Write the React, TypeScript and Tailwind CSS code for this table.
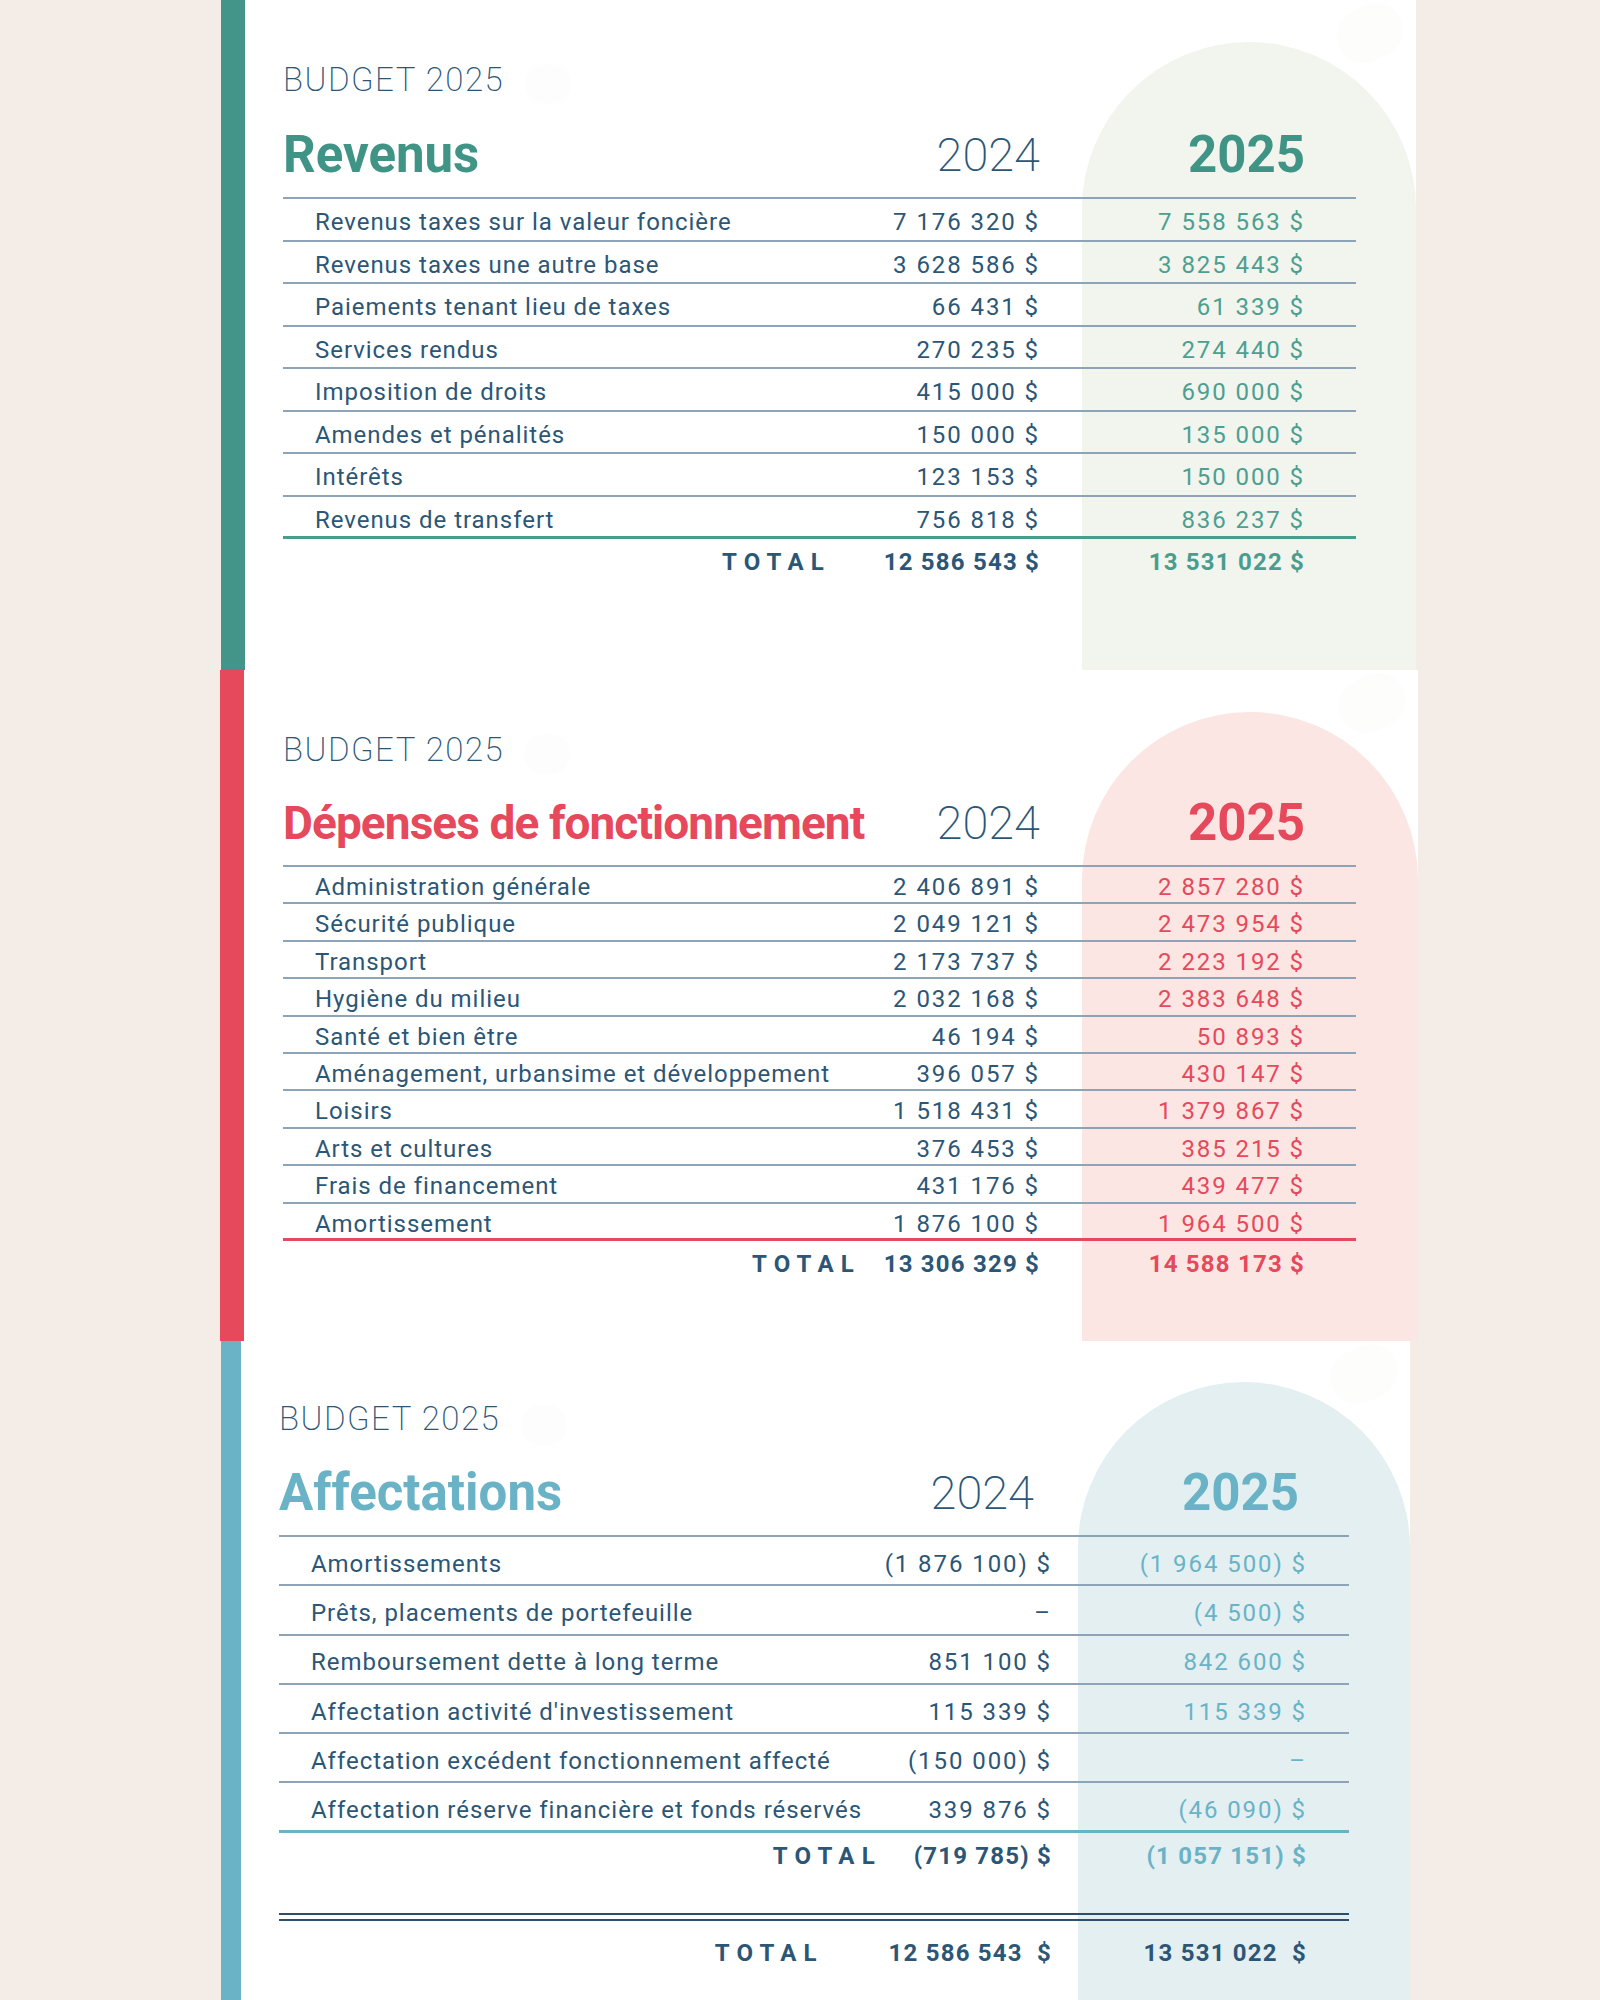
import React from "react";

type Row = { label: string; a: string; b: string };

type SectionProps = {
  wrap: string; // outer margin + height
  bar: string; // bar width + colour
  panel: string; // panel width
  arch: string; // arch colour + geometry
  content: string; // padding left
  table: string; // table width
  cols: string; // grid columns
  title: string;
  titleCls: string;
  headA: string;
  headB: string;
  rowH: string;
  rowPad: string;
  lastRule: string;
  valueCls: string;
  totalCls: string;
  totalGap: string;
  totalA: string;
  totalB: string;
  budgetTop: string;
  titleGap: string;
  rows: Row[];
  footer?: React.ReactNode;
};

const navy = "text-[#2c5676]";

const revenus: Row[] = [
  { label: "Revenus taxes sur la valeur foncière", a: "7 176 320 $", b: "7 558 563 $" },
  { label: "Revenus taxes une autre base", a: "3 628 586 $", b: "3 825 443 $" },
  { label: "Paiements tenant lieu de taxes", a: "66 431 $", b: "61 339 $" },
  { label: "Services rendus", a: "270 235 $", b: "274 440 $" },
  { label: "Imposition de droits", a: "415 000 $", b: "690 000 $" },
  { label: "Amendes et pénalités", a: "150 000 $", b: "135 000 $" },
  { label: "Intérêts", a: "123 153 $", b: "150 000 $" },
  { label: "Revenus de transfert", a: "756 818 $", b: "836 237 $" },
];

const depenses: Row[] = [
  { label: "Administration générale", a: "2 406 891 $", b: "2 857 280 $" },
  { label: "Sécurité publique", a: "2 049 121 $", b: "2 473 954 $" },
  { label: "Transport", a: "2 173 737 $", b: "2 223 192 $" },
  { label: "Hygiène du milieu", a: "2 032 168 $", b: "2 383 648 $" },
  { label: "Santé et bien être", a: "46 194 $", b: "50 893 $" },
  { label: "Aménagement, urbansime et développement", a: "396 057 $", b: "430 147 $" },
  { label: "Loisirs", a: "1 518 431 $", b: "1 379 867 $" },
  { label: "Arts et cultures", a: "376 453 $", b: "385 215 $" },
  { label: "Frais de financement", a: "431 176 $", b: "439 477 $" },
  { label: "Amortissement", a: "1 876 100 $", b: "1 964 500 $" },
];

const affectations: Row[] = [
  { label: "Amortissements", a: "(1 876 100) $", b: "(1 964 500) $" },
  { label: "Prêts, placements de portefeuille", a: "–", b: "(4 500) $" },
  { label: "Remboursement dette à long terme", a: "851 100 $", b: "842 600 $" },
  { label: "Affectation activité d'investissement", a: "115 339 $", b: "115 339 $" },
  { label: "Affectation excédent fonctionnement affecté", a: "(150 000) $", b: "–" },
  { label: "Affectation réserve financière et fonds réservés", a: "339 876 $", b: "(46 090) $" },
];

function Section(p: SectionProps) {
  return (
    <div className={`flex ${p.wrap}`}>
      <div className={`shrink-0 ${p.bar}`} />
      <div className={`relative overflow-hidden bg-white ${p.panel}`}>
        {/* decorative arch behind the 2025 column, plus two faint blobs */}
        <div className={`absolute right-0 bottom-0 rounded-t-full ${p.arch}`} />
        <div className="absolute right-[12px] top-[6px] h-[54px] w-[68px] rotate-[-25deg] rounded-full bg-[#fdfdfc]" />
        <div className="absolute left-[280px] top-[64px] h-[40px] w-[46px] rounded-full bg-[#fdfdfd]" />
        <div className={`relative ${p.content}`}>
          <div className={`${p.table}`}>
            <div className={`${p.budgetTop} h-[40px] text-[33px] font-extralight leading-[40px] tracking-[0.045em] ${navy}`}>
              BUDGET 2025
            </div>
            <div className={`grid ${p.cols} ${p.titleGap} h-[60px] items-center leading-[60px]`}>
              <div className={`whitespace-nowrap font-bold ${p.titleCls}`}>{p.title}</div>
              <div className={`text-right text-[47px] font-extralight ${navy} ${p.headA}`}>2024</div>
              <div className={`text-right text-[51px] font-bold ${p.headB}`}>2025</div>
            </div>
            <div className="mt-[12px] border-t-2 border-[#8da3b7]">
              {p.rows.map((r, i) => (
                <div
                  key={r.label}
                  className={`grid ${p.cols} ${p.rowH} items-center text-[24px] ${navy} ${
                    i === p.rows.length - 1 ? p.lastRule : "border-b-2 border-[#8da3b7]"
                  }`}
                >
                  <div className={`pl-[32px] whitespace-nowrap tracking-[0.04em] ${p.rowPad}`}>{r.label}</div>
                  <div className={`text-right whitespace-nowrap tracking-[0.08em] ${p.rowPad}`}>{r.a}</div>
                  <div className={`text-right whitespace-nowrap tracking-[0.08em] ${p.valueCls} ${p.rowPad}`}>{r.b}</div>
                </div>
              ))}
            </div>
            <div className={`grid ${p.cols} h-[46px] items-center text-[24px] font-bold`}>
              <div className={`col-span-2 flex items-center justify-end ${p.totalGap} ${navy}`}>
                <span className="mr-[-0.3em] tracking-[0.3em]">TOTAL</span>
                <span className="whitespace-nowrap tracking-[0.05em]">{p.totalA}</span>
              </div>
              <div className={`text-right whitespace-nowrap tracking-[0.05em] ${p.totalCls}`}>{p.totalB}</div>
            </div>
            {p.footer}
          </div>
        </div>
      </div>
    </div>
  );
}

export default function App() {
  return (
    <div className="h-[2000px] w-[1600px] overflow-hidden bg-[#f4ece6] font-['Roboto',sans-serif]">
      <Section
        wrap="ml-[221px] h-[670px]"
        bar="w-[24px] bg-[#43958a]"
        panel="w-[1171px]"
        arch="top-[42px] w-[334px] bg-[#f1f5ee]"
        content="pl-[38px]"
        table="w-[1073px]"
        cols="grid-cols-[517px_240px_265px_51px]"
        title="Revenus"
        titleCls="text-[51px] text-[#3f9486]"
        headA=""
        headB="text-[#3f9486]"
        rowH="h-[42.5px]"
        rowPad="pt-[5px]"
        lastRule="border-b-[3px] border-[#4a9c8e]"
        valueCls="text-[#4d9f90]"
        totalCls="text-[#4a9c8e]"
        totalGap="gap-[60px]"
        totalA="12 586 543 $"
        totalB="13 531 022 $"
        budgetTop="mt-[60px]"
        titleGap="mt-[25px]"
        rows={revenus}
      />
      <Section
        wrap="ml-[220px] h-[671px]"
        bar="w-[24px] bg-[#e6495b]"
        panel="w-[1174px]"
        arch="top-[42px] w-[336px] bg-[#fbe6e3]"
        content="pl-[39px]"
        table="w-[1073px]"
        cols="grid-cols-[517px_240px_265px_51px]"
        title="Dépenses de fonctionnement"
        titleCls="text-[46px] tracking-[-0.02em] text-[#e6495b]"
        headA=""
        headB="text-[#e6495b]"
        rowH="h-[37.4px]"
        rowPad="pt-[2px]"
        lastRule="border-b-[3px] border-[#e6495b]"
        valueCls="text-[#e6495b]"
        totalCls="text-[#e6495b]"
        totalGap="gap-[30px]"
        totalA="13 306 329 $"
        totalB="14 588 173 $"
        budgetTop="mt-[60px]"
        titleGap="mt-[23px]"
        rows={depenses}
      />
      <Section
        wrap="ml-[221px] h-[659px]"
        bar="w-[20px] bg-[#6ab3c6]"
        panel="w-[1169px]"
        arch="top-[41px] w-[332px] bg-[#e3eff1]"
        content="pl-[38px]"
        table="w-[1070px]"
        cols="grid-cols-[533px_240px_255px_42px]"
        title="Affectations"
        titleCls="text-[51px] text-[#6ab3c6]"
        headA="pr-[18px]"
        headB="pr-[8px] text-[#6ab3c6]"
        rowH="h-[49.3px]"
        rowPad="pt-[6px]"
        lastRule="border-b-[3px] border-[#6ab3c6]"
        valueCls="text-[#6ab3c6]"
        totalCls="text-[#6ab3c6]"
        totalGap="gap-[39px]"
        totalA="(719 785) $"
        totalB="(1 057 151) $"
        budgetTop="mt-[58px]"
        titleGap="mt-[24px]"
        rows={affectations}
        footer={
          <>
            <div className="mt-[34px] h-[8px] border-y-2 border-[#2c4f6b]" />
            <div className="mt-[10px] grid h-[44px] grid-cols-[533px_240px_255px_42px] items-center text-[24px] font-bold text-[#2c5676]">
              <div className="col-span-2 flex items-center justify-end gap-[72px]">
                <span className="mr-[-0.3em] tracking-[0.3em]">TOTAL</span>
                <span className="whitespace-nowrap tracking-[0.05em]">12 586 543&nbsp; $</span>
              </div>
              <div className="text-right whitespace-nowrap tracking-[0.05em]">13 531 022&nbsp; $</div>
            </div>
          </>
        }
      />
    </div>
  );
}
